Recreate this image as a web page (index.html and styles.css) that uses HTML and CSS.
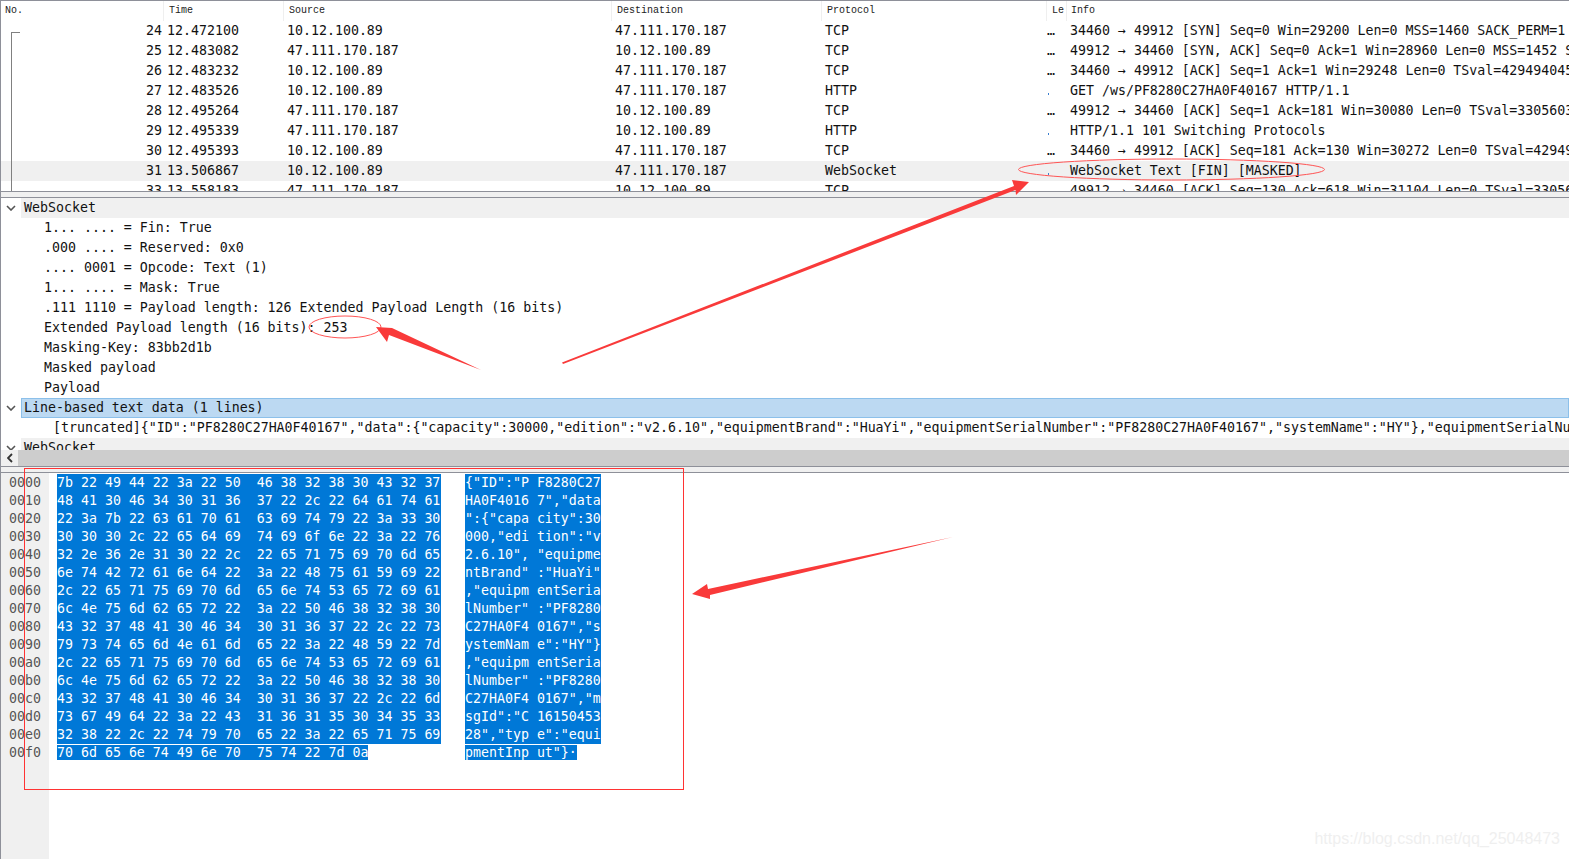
FILE: index.html
```html
<!DOCTYPE html>
<html lang="en">
<head>
<meta charset="utf-8">
<title>Wireshark WebSocket capture</title>
<link rel="stylesheet" href="styles.css">
</head>
<body>
<main class="app">
  <section class="packets">
    <div class="row head">
      <span class="c-no">No.</span><span class="c-time">Time</span><span class="c-src">Source</span><span class="c-dst">Destination</span><span class="c-proto">Protocol</span><span class="c-len">Le</span><span class="c-info">Info</span>
    </div>
    <div class="packet-body">
      <div class="row"><span class="c-no">24</span><span class="c-time">12.472100</span><span class="c-src">10.12.100.89</span><span class="c-dst">47.111.170.187</span><span class="c-proto">TCP</span><span class="c-len">…</span><span class="c-info">34460 → 49912 [SYN] Seq=0 Win=29200 Len=0 MSS=1460 SACK_PERM=1 TSval=4294940454</span></div>
      <div class="row"><span class="c-no">25</span><span class="c-time">12.483082</span><span class="c-src">47.111.170.187</span><span class="c-dst">10.12.100.89</span><span class="c-proto">TCP</span><span class="c-len">…</span><span class="c-info">49912 → 34460 [SYN, ACK] Seq=0 Ack=1 Win=28960 Len=0 MSS=1452 SACK_PERM=1 TSval=3305603</span></div>
      <div class="row"><span class="c-no">26</span><span class="c-time">12.483232</span><span class="c-src">10.12.100.89</span><span class="c-dst">47.111.170.187</span><span class="c-proto">TCP</span><span class="c-len">…</span><span class="c-info">34460 → 49912 [ACK] Seq=1 Ack=1 Win=29248 Len=0 TSval=4294940454 TSecr=3305603</span></div>
      <div class="row"><span class="c-no">27</span><span class="c-time">12.483526</span><span class="c-src">10.12.100.89</span><span class="c-dst">47.111.170.187</span><span class="c-proto">HTTP</span><span class="c-len"><i class="mark"></i></span><span class="c-info">GET /ws/PF8280C27HA0F40167 HTTP/1.1</span></div>
      <div class="row"><span class="c-no">28</span><span class="c-time">12.495264</span><span class="c-src">47.111.170.187</span><span class="c-dst">10.12.100.89</span><span class="c-proto">TCP</span><span class="c-len">…</span><span class="c-info">49912 → 34460 [ACK] Seq=1 Ack=181 Win=30080 Len=0 TSval=3305603 TSecr=4294940454</span></div>
      <div class="row"><span class="c-no">29</span><span class="c-time">12.495339</span><span class="c-src">47.111.170.187</span><span class="c-dst">10.12.100.89</span><span class="c-proto">HTTP</span><span class="c-len"><i class="mark"></i></span><span class="c-info">HTTP/1.1 101 Switching Protocols</span></div>
      <div class="row"><span class="c-no">30</span><span class="c-time">12.495393</span><span class="c-src">10.12.100.89</span><span class="c-dst">47.111.170.187</span><span class="c-proto">TCP</span><span class="c-len">…</span><span class="c-info">34460 → 49912 [ACK] Seq=181 Ack=130 Win=30272 Len=0 TSval=4294940454 TSecr=3305603</span></div>
      <div class="row current"><span class="c-no">31</span><span class="c-time">13.506867</span><span class="c-src">10.12.100.89</span><span class="c-dst">47.111.170.187</span><span class="c-proto">WebSocket</span><span class="c-len"><i class="mark"></i></span><span class="c-info">WebSocket Text [FIN] [MASKED]</span></div>
      <div class="row"><span class="c-no">33</span><span class="c-time">13.558183</span><span class="c-src">47.111.170.187</span><span class="c-dst">10.12.100.89</span><span class="c-proto">TCP</span><span class="c-len">…</span><span class="c-info">49912 → 34460 [ACK] Seq=130 Ack=618 Win=31104 Len=0 TSval=3305603 TSecr=4294940454</span></div>
      <div class="conv-line"></div>
    </div>
  </section>

  <div class="splitter"></div>

  <section class="details">
    <div class="node top"><svg class="chev" viewBox="0 0 10 6"><path d="M1 1l4 4 4-4"/></svg><span>WebSocket</span></div>
    <div class="leaf">1... .... = Fin: True</div>
    <div class="leaf">.000 .... = Reserved: 0x0</div>
    <div class="leaf">.... 0001 = Opcode: Text (1)</div>
    <div class="leaf">1... .... = Mask: True</div>
    <div class="leaf">.111 1110 = Payload length: 126 Extended Payload Length (16 bits)</div>
    <div class="leaf">Extended Payload length (16 bits): 253</div>
    <div class="leaf">Masking-Key: 83bb2d1b</div>
    <div class="leaf">Masked payload</div>
    <div class="leaf">Payload</div>
    <div class="node selected"><svg class="chev" viewBox="0 0 10 6"><path d="M1 1l4 4 4-4"/></svg><span>Line-based text data (1 lines)</span></div>
    <div class="leaf deep">[truncated]{"ID":"PF8280C27HA0F40167","data":{"capacity":30000,"edition":"v2.6.10","equipmentBrand":"HuaYi","equipmentSerialNumber":"PF8280C27HA0F40167","systemName":"HY"},"equipmentSerialNumber":"PF8280C27HA0F40167"</div>
    <div class="node clipped"><svg class="chev" viewBox="0 0 10 6"><path d="M1 1l4 4 4-4"/></svg><span>WebSocket</span></div>
  </section>

  <div class="hscroll">
    <div class="hbutton"><svg viewBox="0 0 6 10"><path d="M5 1L1 5l4 4"/></svg></div>
    <div class="hthumb"></div>
  </div>

  <div class="splitter lower"></div>

  <section class="bytes">
    <div class="offsets">
      <div>0000</div><div>0010</div><div>0020</div><div>0030</div><div>0040</div><div>0050</div><div>0060</div><div>0070</div><div>0080</div><div>0090</div><div>00a0</div><div>00b0</div><div>00c0</div><div>00d0</div><div>00e0</div><div>00f0</div>
    </div>
    <div class="dump">
      <div class="line"><span class="hex sel">7b 22 49 44 22 3a 22 50  46 38 32 38 30 43 32 37</span><span class="ascii sel">{"ID":"P F8280C27</span></div>
      <div class="line"><span class="hex sel">48 41 30 46 34 30 31 36  37 22 2c 22 64 61 74 61</span><span class="ascii sel">HA0F4016 7","data</span></div>
      <div class="line"><span class="hex sel">22 3a 7b 22 63 61 70 61  63 69 74 79 22 3a 33 30</span><span class="ascii sel">":{"capa city":30</span></div>
      <div class="line"><span class="hex sel">30 30 30 2c 22 65 64 69  74 69 6f 6e 22 3a 22 76</span><span class="ascii sel">000,"edi tion":"v</span></div>
      <div class="line"><span class="hex sel">32 2e 36 2e 31 30 22 2c  22 65 71 75 69 70 6d 65</span><span class="ascii sel">2.6.10", "equipme</span></div>
      <div class="line"><span class="hex sel">6e 74 42 72 61 6e 64 22  3a 22 48 75 61 59 69 22</span><span class="ascii sel">ntBrand" :"HuaYi"</span></div>
      <div class="line"><span class="hex sel">2c 22 65 71 75 69 70 6d  65 6e 74 53 65 72 69 61</span><span class="ascii sel">,"equipm entSeria</span></div>
      <div class="line"><span class="hex sel">6c 4e 75 6d 62 65 72 22  3a 22 50 46 38 32 38 30</span><span class="ascii sel">lNumber" :"PF8280</span></div>
      <div class="line"><span class="hex sel">43 32 37 48 41 30 46 34  30 31 36 37 22 2c 22 73</span><span class="ascii sel">C27HA0F4 0167","s</span></div>
      <div class="line"><span class="hex sel">79 73 74 65 6d 4e 61 6d  65 22 3a 22 48 59 22 7d</span><span class="ascii sel">ystemNam e":"HY"}</span></div>
      <div class="line"><span class="hex sel">2c 22 65 71 75 69 70 6d  65 6e 74 53 65 72 69 61</span><span class="ascii sel">,"equipm entSeria</span></div>
      <div class="line"><span class="hex sel">6c 4e 75 6d 62 65 72 22  3a 22 50 46 38 32 38 30</span><span class="ascii sel">lNumber" :"PF8280</span></div>
      <div class="line"><span class="hex sel">43 32 37 48 41 30 46 34  30 31 36 37 22 2c 22 6d</span><span class="ascii sel">C27HA0F4 0167","m</span></div>
      <div class="line"><span class="hex sel">73 67 49 64 22 3a 22 43  31 36 31 35 30 34 35 33</span><span class="ascii sel">sgId":"C 16150453</span></div>
      <div class="line"><span class="hex sel">32 38 22 2c 22 74 79 70  65 22 3a 22 65 71 75 69</span><span class="ascii sel">28","typ e":"equi</span></div>
      <div class="line"><span class="hex"><span class="sel">70 6d 65 6e 74 49 6e 70  75 74 22 7d 0a</span></span><span class="ascii"><span class="sel">pmentInp ut"}·</span></span></div>
    </div>
  </section>
</main>

<svg class="marks" viewBox="0 0 1569 859" aria-hidden="true">
  <rect class="outline box" x="24.5" y="468.5" width="659" height="321"/>
  <ellipse class="outline" cx="1171.5" cy="169.5" rx="153" ry="10.5"/>
  <ellipse class="outline" cx="345" cy="327" rx="36" ry="11"/>
  <polygon class="arrow" points="562,362.5 1014,186 1012,180 1029,182 1016,195 1015.5,190 563,364"/>
  <polygon class="arrow" points="481,370 392,328 376,327 387,342 389,335"/>
  <polygon class="arrow" points="953,537 708,589 707,584 692,594 710,599 710,595"/>
</svg>
<div class="watermark">https://blog.csdn.net/qq_25048473</div>
</body>
</html>
```
FILE: styles.css
```css
* { box-sizing: border-box; }
html, body { margin: 0; height: 100%; overflow: hidden; background: #fff; }
body { position: relative; }

.app {
  height: 859px;
  display: flex;
  flex-direction: column;
  border-left: 1px solid #8e9099;
  font: 13.28px/20px "DejaVu Sans Mono", "Liberation Mono", monospace;
  color: #111;
}
.row > span, .leaf, .node span, .sel { white-space: pre; }

/* packet list */
.packets { height: 191px; flex: none; border-top: 1px solid #8e9099; overflow: hidden; }
.row {
  display: grid;
  grid-template-columns: 162px 120px 328px 210px 225px 20px 1fr;
  height: 20px;
}
.row > span { overflow: hidden; padding-left: 4px; }
.row .c-no { text-align: right; padding: 0 1px 0 0; }
.row .c-len { padding-left: 1px; position: relative; }
.row .c-info { padding-left: 4px; }
.row.current { background: #f0f0f0; }
.mark { position: absolute; left: 2px; top: 12px; width: 1px; height: 2px; background: #3b7fd0; }

.head { font: 10px/20px "Liberation Mono", monospace; color: #222; }
.head > span { padding-left: 5px; border-left: 1px solid #efefef; }
.head .c-no { text-align: left; padding-left: 4px; border-left: 0; }
.head .c-len { padding-left: 5px; border-left: 1px solid #efefef; }
.head .c-info { padding-left: 4px; border-left: 1px solid #efefef; }

.packet-body { position: relative; }
.conv-line {
  position: absolute;
  left: 10px;
  top: 11px;
  bottom: 0;
  width: 9px;
  border-left: 1px solid #808080;
  border-top: 1px solid #808080;
}

/* splitters */
.splitter {
  height: 7px;
  flex: none;
  background: #f0f0f0;
  border-top: 1px solid #8e9099;
  border-bottom: 1px solid #8e9099;
}

/* details tree */
.details { height: 252px; flex: none; overflow: hidden; }
.node { display: flex; height: 20px; align-items: center; position: relative; }
.node span { flex: 1; height: 100%; padding-left: 3px; background: #f0f0f0; margin-left: 20px; }
.node.selected span { background: #bcd9f2; box-shadow: inset 0 0 0 1px #8cc0ea; }
.node.clipped { height: 12px; align-items: flex-start; overflow: hidden; }
.node.clipped span { height: 20px; flex: none; width: calc(100% - 20px); }
.chev {
  position: absolute;
  left: 5px;
  top: 7px;
  width: 10px;
  height: 6px;
  fill: none;
  stroke: #555;
  stroke-width: 1.6;
}
.leaf { height: 20px; padding-left: 43px; overflow: hidden; }
.leaf.deep { padding-left: 52px; }

/* horizontal scrollbar */
.hscroll { display: flex; height: 16px; flex: none; background: #cdcdcd; }
.hbutton { width: 17px; background: #f0f0f0; display: flex; align-items: center; justify-content: center; }
.hbutton svg { width: 6px; height: 10px; fill: none; stroke: #333; stroke-width: 1.8; }
.hthumb { flex: 1; }

/* byte pane */
.bytes { flex: 1; display: flex; line-height: 18px; overflow: hidden; }
.offsets { width: 48px; flex: none; padding: 1px 0 0 8px; background: #f0f0f0; color: #555; }
.dump { flex: 1; padding: 1px 0 0 8px; }
.line { display: flex; height: 18px; }
.hex { width: 408px; flex: none; }
.ascii { flex: none; }
.hex.sel { width: 384px; margin-right: 24px; }
.sel { background: #0078d7; color: #fff; }

/* annotations drawn over the screenshot */
.marks { position: absolute; left: 0; top: 0; width: 1569px; height: 859px; pointer-events: none; }
.outline { fill: none; stroke: #f55; stroke-width: 1; }
.box { stroke: #f33; }
.arrow { fill: #f93a3a; }

.watermark {
  position: absolute;
  right: 9px;
  top: 829px;
  font: 16px/20px "Liberation Sans", Arial, sans-serif;
  color: #efefef;
}
```
